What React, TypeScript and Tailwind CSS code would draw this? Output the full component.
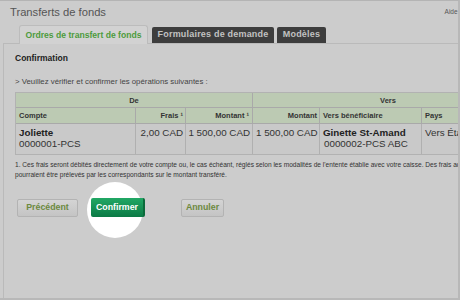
import React from "react";

const F = { fontFamily: '"Liberation Sans", Arial, sans-serif' };

export default function App() {
  return (
    <div
      style={F}
      className="relative w-[460px] h-[300px] overflow-hidden bg-[#cccccc] border-t border-t-[#b4b4b4] border-r-2 border-r-[#b8b8b8] border-b-2 border-b-[#b8b8b8] text-[#333]"
    >
      {/* header */}
      <div className="flex items-start justify-between h-[23px]">
        <div className="pl-[10px] pt-[4px] text-[11.2px] leading-[14px] text-[#555]">Transferts de fonds</div>
        <div className="pt-[6px] text-[6.5px] leading-[9px] text-[#555] mr-[-5px]">Aide ?</div>
      </div>
      {/* tabs */}
      <div className="flex items-end h-[19px] pl-[19px]">
        <div className="w-[129px] h-[19px] rounded-t-[3px] border border-b-0 border-[#bcbcbc] bg-[#d2d2d2] flex items-center justify-center text-[8.6px] font-bold text-[#4d9b3c] relative z-10 mb-[-1px]">
          Ordres de transfert de fonds
        </div>
        <div className="ml-[4px] w-[122px] h-[16px] rounded-t-[2px] bg-[#3d3d3d] flex items-center justify-center text-[9px] font-bold text-[#c2c2c2] tracking-[0.2px]">
          Formulaires de demande
        </div>
        <div className="ml-[3px] w-[49px] h-[16px] rounded-t-[2px] bg-[#3d3d3d] flex items-center justify-center text-[9px] font-bold text-[#c2c2c2] tracking-[0.2px]">
          Modèles
        </div>
      </div>
      {/* panel */}
      <div className="ml-[3px] border-l border-t border-[#bababa] h-[258px] pl-[11px]">
        <div className="mt-[8px] text-[8.5px] leading-[12px] font-bold text-[#222]">Confirmation</div>
        <div className="mt-[12px] text-[7.8px] leading-[12px] text-[#444] whitespace-nowrap">
          &gt; Veuillez vérifier et confirmer les opérations suivantes :
        </div>
        {/* table */}
        <div className="mt-[4px] w-[520px] border border-[#b2b2b2] text-[#333]">
          <div className="flex h-[15px] bg-[#bccab3] border-b border-[#a9a9a9] text-[7.5px] font-bold leading-[15px]">
            <div className="w-[237px] text-center border-r border-[#a9a9a9]">De</div>
            <div className="w-[270px] text-center">Vers</div>
          </div>
          <div className="flex h-[16px] bg-[#bccab3] border-b border-[#a9a9a9] text-[7.5px] font-bold leading-[16px]">
            <div className="w-[120px] pl-[3px] border-r border-[#a9a9a9]">Compte</div>
            <div className="w-[50px] pr-[2px] text-right border-r border-[#a9a9a9]">Frais ¹</div>
            <div className="w-[67px] pr-[3px] text-right border-r border-[#a9a9a9]">Montant ¹</div>
            <div className="w-[67px] pr-[2px] text-right border-r border-[#a9a9a9]">Montant</div>
            <div className="w-[102px] pl-[3px] border-r border-[#a9a9a9]">Vers bénéficiaire</div>
            <div className="w-[80px] pl-[3px]">Pays</div>
          </div>
          <div className="flex h-[30px] bg-[#c9c9c9] text-[9.8px] leading-[11px]">
            <div className="w-[120px] pl-[3px] pt-[3px] border-r border-[#b0b0b0]">
              <div className="font-bold text-[#222]">Joliette</div>
              <div>0000001-PCS</div>
            </div>
            <div className="w-[50px] pr-[2px] pt-[3px] text-right border-r border-[#b0b0b0] whitespace-nowrap">2,00 CAD</div>
            <div className="w-[67px] pr-[2px] pt-[3px] text-right border-r border-[#b0b0b0] whitespace-nowrap">1 500,00 CAD</div>
            <div className="w-[67px] pl-[3px] pt-[3px] border-r border-[#b0b0b0] whitespace-nowrap">1 500,00 CAD</div>
            <div className="w-[102px] pl-[3px] pt-[3px] border-r border-[#b0b0b0] whitespace-nowrap">
              <div className="font-bold text-[#222]">Ginette St-Amand</div>
              <div className="pl-[1px]">0000002-PCS ABC</div>
            </div>
            <div className="w-[80px] pl-[3px] pt-[3px] whitespace-nowrap">Vers États-Unis</div>
          </div>
        </div>
        {/* footnote */}
        <div className="mt-[5px] text-[6.6px] leading-[10px] text-[#333] whitespace-nowrap">
          <div>
            1. Ces frais seront débités directement de votre compte ou, le cas échéant, réglés selon les modalités de l'entente établie avec votre caisse. Des frais additionnels
          </div>
          <div>pourraient être prélevés par les correspondants sur le montant transféré.</div>
        </div>
        {/* buttons */}
        <div className="relative mt-[18px] flex items-center h-[19px]">
          <div className="ml-[2px] w-[61px] h-[18px] rounded-[2px] border border-[#b3b3b3] bg-gradient-to-b from-[#d4d4d4] to-[#c4c4c4] flex items-center justify-center text-[8.8px] font-bold text-[#6c8a3e]">
            Précédent
          </div>
          <div className="absolute left-[72px] top-[-16px] w-[56px] h-[56px] rounded-full bg-white" />
          <div className="relative ml-[13px] w-[54px] h-[19px] rounded-[2px] bg-gradient-to-b from-[#21a865] to-[#0b7a45] border-r-2 border-r-[#0a6a3a] flex items-center justify-center text-[8.8px] font-bold text-white">
            Confirmer
          </div>
          <div className="ml-[36px] w-[43px] h-[18px] rounded-[2px] border border-[#b3b3b3] bg-gradient-to-b from-[#d4d4d4] to-[#c4c4c4] flex items-center justify-center text-[8.8px] font-bold text-[#6c8a3e]">
            Annuler
          </div>
        </div>
      </div>
    </div>
  );
}
